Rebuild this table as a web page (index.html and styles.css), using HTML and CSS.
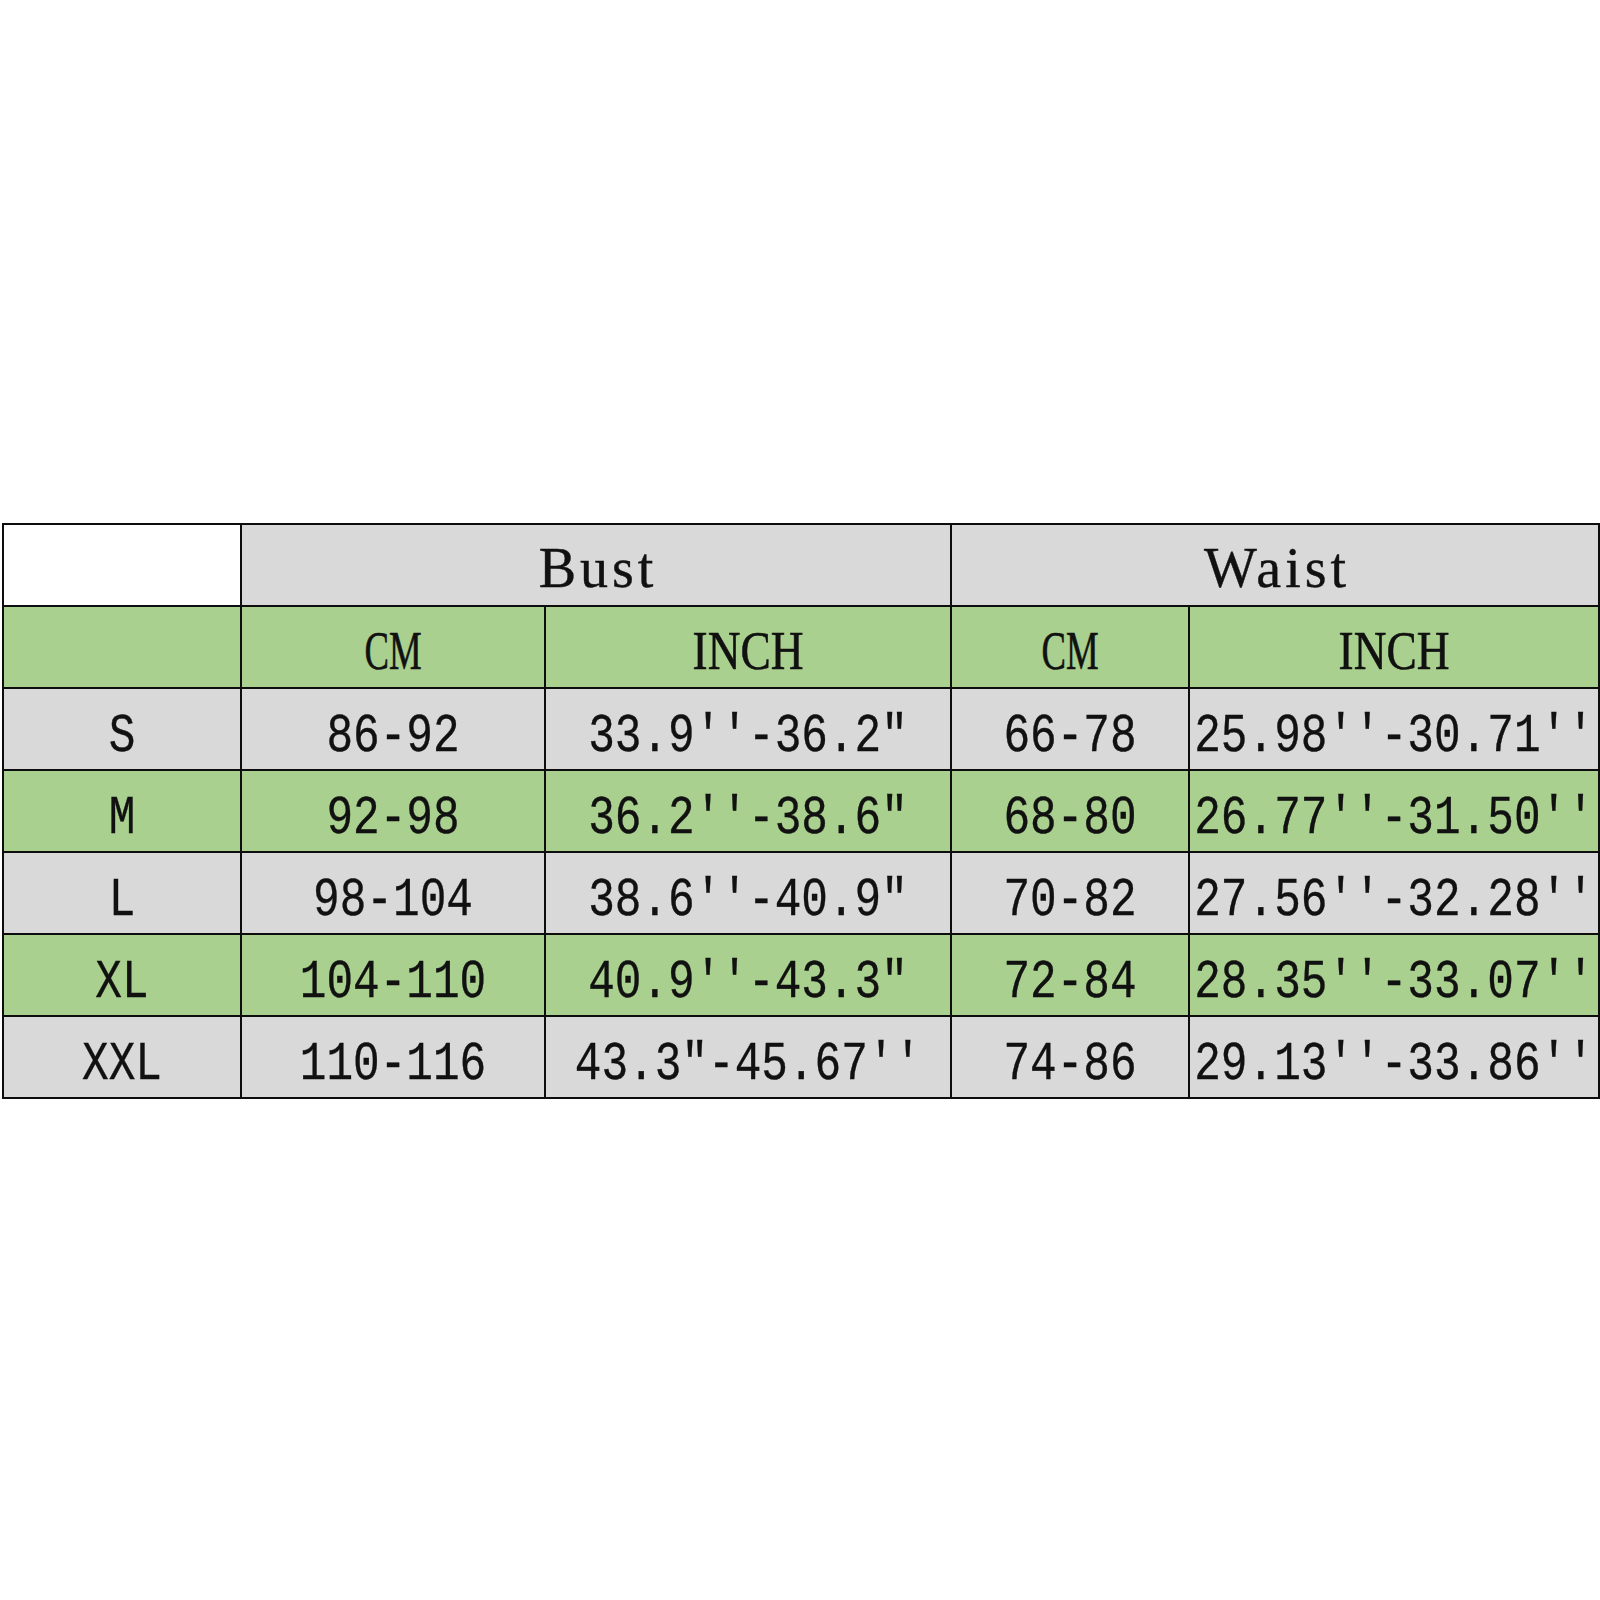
FILE: index.html
```html
<!DOCTYPE html>
<html lang="en">
<head>
<meta charset="utf-8">
<title>Size chart</title>
<link rel="stylesheet" href="styles.css">
</head>
<body>
<div class="page">
  <table class="chart">
    <colgroup>
      <col class="c-size">
      <col class="c-cm">
      <col class="c-inch">
      <col class="c-cm2">
      <col class="c-inch2">
    </colgroup>
    <tr class="row-group">
      <td class="blank"></td>
      <td colspan="2" class="group">Bust</td>
      <td colspan="2" class="group">Waist</td>
    </tr>
    <tr class="row-unit green">
      <td></td>
      <td class="unit"><span class="squeeze cm">CM</span></td>
      <td class="unit"><span class="squeeze inch">INCH</span></td>
      <td class="unit"><span class="squeeze cm">CM</span></td>
      <td class="unit"><span class="squeeze inch">INCH</span></td>
    </tr>
    <tr class="gray">
      <td><span class="num">S</span></td><td><span class="num">86-92</span></td><td><span class="num">33.9''-36.2"</span></td><td><span class="num">66-78</span></td><td><span class="num">25.98''-30.71''</span></td>
    </tr>
    <tr class="green">
      <td><span class="num">M</span></td><td><span class="num">92-98</span></td><td><span class="num">36.2''-38.6"</span></td><td><span class="num">68-80</span></td><td><span class="num">26.77''-31.50''</span></td>
    </tr>
    <tr class="gray">
      <td><span class="num">L</span></td><td><span class="num">98-104</span></td><td><span class="num">38.6''-40.9"</span></td><td><span class="num">70-82</span></td><td><span class="num">27.56''-32.28''</span></td>
    </tr>
    <tr class="green">
      <td><span class="num">XL</span></td><td><span class="num">104-110</span></td><td><span class="num">40.9''-43.3"</span></td><td><span class="num">72-84</span></td><td><span class="num">28.35''-33.07''</span></td>
    </tr>
    <tr class="gray">
      <td><span class="num">XXL</span></td><td><span class="num">110-116</span></td><td><span class="num">43.3"-45.67''</span></td><td><span class="num">74-86</span></td><td><span class="num">29.13''-33.86''</span></td>
    </tr>
  </table>
</div>
</body>
</html>
```

FILE: styles.css
```css
html, body {
  margin: 0;
  padding: 0;
  background: #ffffff;
}

.page {
  width: 1600px;
  height: 1600px;
  padding: 523px 0 0 2px;
  box-sizing: border-box;
}

.chart {
  border-collapse: collapse;
  table-layout: fixed;
  width: 1596px;
  font-family: "Liberation Sans", Arial, sans-serif;
  font-size: 52px;
  color: #111111;
}

.c-size { width: 238px; }
.c-cm { width: 304px; }
.c-inch { width: 406px; }
.c-cm2 { width: 238px; }
.c-inch2 { width: 410px; }

.chart td {
  border: 2px solid #0d0d0d;
  height: 82px;
  padding: 5px 0 0 0;
  box-sizing: border-box;
  text-align: center;
  vertical-align: middle;
  white-space: nowrap;
  overflow: visible;
  line-height: 1;
}

.chart tr {
  height: 82px;
}

.row-group td {
  background: #d9d9d9;
}

.row-group td.blank {
  background: #ffffff;
}

.chart td.group {
  font-family: "Liberation Serif", "Times New Roman", serif;
  font-size: 56px;
  letter-spacing: 4px;
  text-indent: 4px;
  padding-top: 6px;
  -webkit-text-stroke: 0.4px #111111;
}

.green td {
  background: #a9d08e;
}

.gray td {
  background: #d9d9d9;
}

.chart td.unit {
  font-family: "Liberation Serif", "Times New Roman", serif;
  font-size: 54px;
  padding-top: 8px;
  -webkit-text-stroke: 0.6px #111111;
}

.squeeze {
  display: inline-block;
}

.squeeze.inch {
  transform: scaleX(0.84);
}

.squeeze.cm {
  transform: scaleX(0.68);
}

.num {
  display: inline-block;
  font-family: "Liberation Mono", "Courier New", monospace;
  font-size: 44.4px;
  transform: scaleY(1.22);
  -webkit-text-stroke: 0.3px #111111;
}
```
